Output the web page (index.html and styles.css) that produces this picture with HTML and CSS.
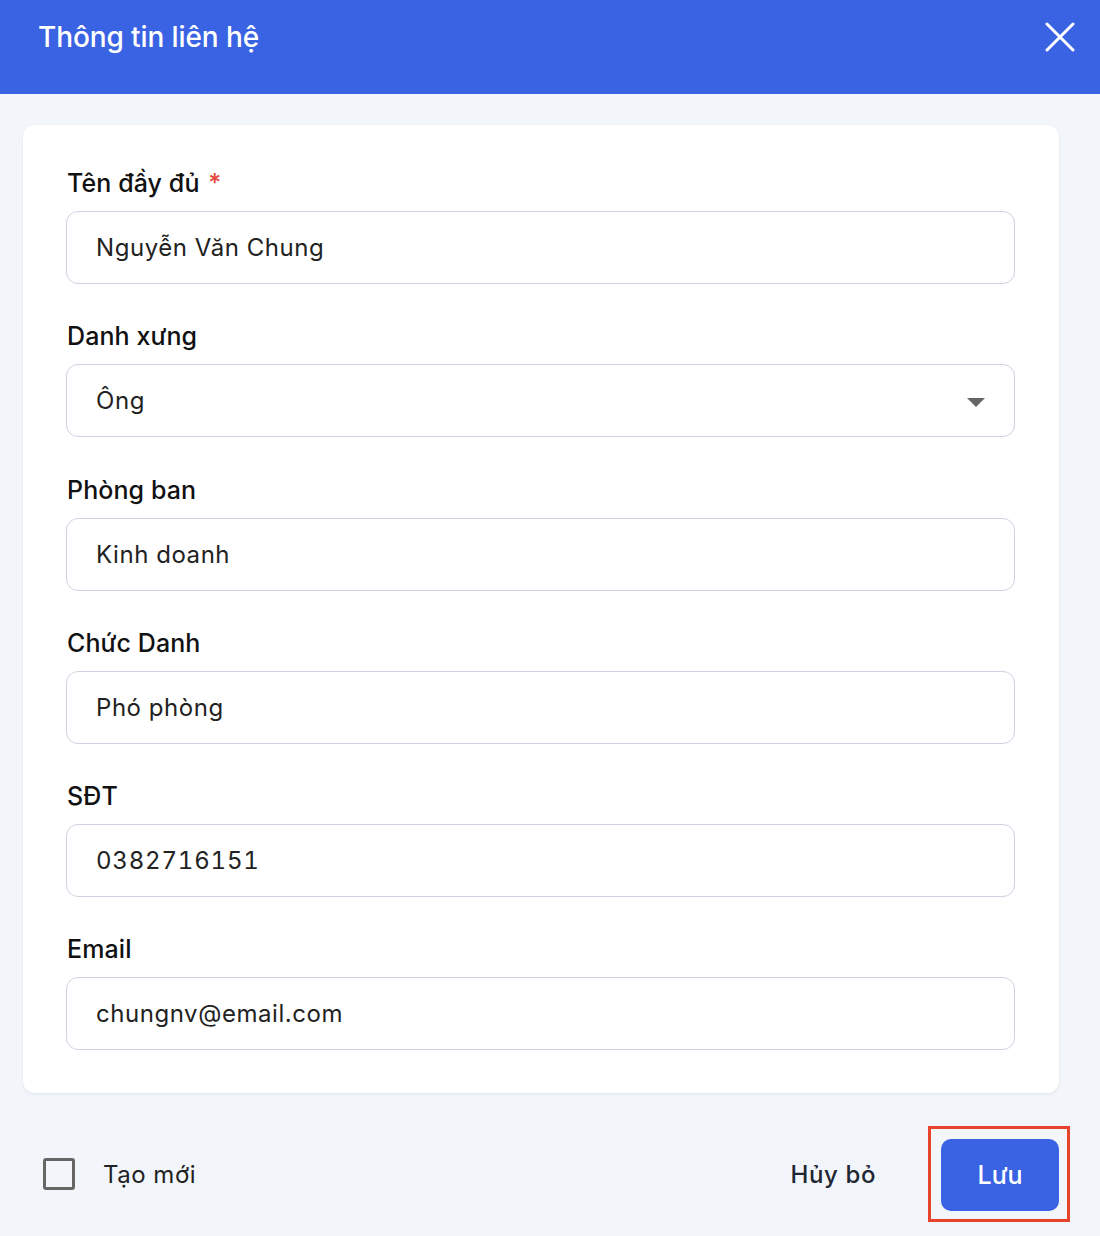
FILE: index.html
```html
<!DOCTYPE html>
<html lang="vi">
<head>
<meta charset="utf-8">
<title>Thông tin liên hệ</title>
<link rel="stylesheet" href="styles.css">
</head>
<body>
<div class="dialog">
  <header class="header">
    <h1 class="title">Thông tin liên hệ</h1>
    <button class="close" aria-label="Đóng">
      <svg width="30" height="30" viewBox="0 0 30 30"><path d="M2 2 L28 28 M28 2 L2 28" stroke="#fff" stroke-width="3" stroke-linecap="round" fill="none"/></svg>
    </button>
  </header>
  <main class="body">
    <div class="card">
      <div class="field">
        <label class="label">Tên đầy đủ <span class="req">*</span></label>
        <div class="input">Nguyễn Văn Chung</div>
      </div>
      <div class="field">
        <label class="label">Danh xưng</label>
        <div class="input select">Ông
          <svg class="caret" width="18" height="9" viewBox="0 0 18 9"><path d="M0 0 H18 L9 9 Z" fill="#666"/></svg>
        </div>
      </div>
      <div class="field">
        <label class="label">Phòng ban</label>
        <div class="input">Kinh doanh</div>
      </div>
      <div class="field">
        <label class="label">Chức Danh</label>
        <div class="input">Phó phòng</div>
      </div>
      <div class="field">
        <label class="label">SĐT</label>
        <div class="input num">0382716151</div>
      </div>
      <div class="field">
        <label class="label">Email</label>
        <div class="input">chungnv@email.com</div>
      </div>
    </div>
  </main>
  <footer class="footer">
    <label class="check"><span class="box"></span><span class="check-text">Tạo mới</span></label>
    <div class="actions">
      <button class="cancel">Hủy bỏ</button>
      <span class="highlight"><button class="save">Lưu</button></span>
    </div>
  </footer>
</div>
</body>
</html>
```
FILE: styles.css
```css
* { box-sizing: border-box; }
html, body { margin: 0; padding: 0; }
body {
  font-family: Inter, "Noto Sans", "Liberation Sans", sans-serif;
  background: #F2F5FA;
  color: #222;
  width: 1100px;
  height: 1236px;
  overflow: hidden;
}
.header {
  height: 94px;
  background: #3A63E3;
  display: flex;
  align-items: center;
  justify-content: space-between;
  padding: 0 25px 21px 38px;
}
.title {
  margin: 0;
  font-size: 28px;
  font-weight: 500;
  color: #fff;
  letter-spacing: -0.1px;
}
.close {
  background: none;
  border: 0;
  padding: 0;
  width: 30px;
  height: 30px;
  display: flex;
  cursor: pointer;
}
.body {
  padding: 31px 41px 0 23px;
}
.card {
  background: #fff;
  border-radius: 12px;
  box-shadow: 0 1px 3px rgba(30, 40, 70, 0.08);
  padding: 43px 44px 43px 43px;
  display: flex;
  flex-direction: column;
  gap: 37.25px;
}
.field {
  display: flex;
  flex-direction: column;
  gap: 12px;
}
.label {
  font-size: 25px;
  font-weight: 500;
  line-height: 31px;
  color: #111;
  padding-left: 1px;
  letter-spacing: 0.1px;
}
.req { color: #E5483B; margin-left: 2px; }
.input {
  height: 73px;
  border: 1px solid #CDD4E0;
  border-radius: 12px;
  padding: 0 29px;
  display: flex;
  align-items: center;
  font-size: 24px;
  color: #222;
  letter-spacing: 0.55px;
}
.num { font-variant-numeric: tabular-nums; letter-spacing: 0.8px; }
.select { justify-content: space-between; padding-right: 29px; }
.caret { margin-top: 4px; }
.footer {
  display: flex;
  align-items: center;
  justify-content: space-between;
  padding: 33px 30px 0 43px;
}
.check {
  display: flex;
  align-items: center;
  gap: 28px;
}
.box {
  width: 32px;
  height: 32px;
  border: 3px solid #666;
  border-radius: 3px;
}
.check-text {
  font-size: 24px;
  color: #222;
  letter-spacing: 0.5px;
}
.actions {
  display: flex;
  align-items: center;
  gap: 52px;
}
.cancel {
  background: none;
  border: 0;
  font-family: inherit;
  font-size: 24px;
  font-weight: 500;
  color: #1F2633;
  padding: 0;
  letter-spacing: 0.6px;
}
.highlight {
  display: flex;
  border: 3px solid #E8412C;
  padding: 10px 8px 8px 10px;
}
.save {
  width: 118px;
  height: 72px;
  border: 0;
  border-radius: 10px;
  background: #3A63E3;
  color: #fff;
  font-family: inherit;
  font-size: 25px;
  font-weight: 500;
}
```
